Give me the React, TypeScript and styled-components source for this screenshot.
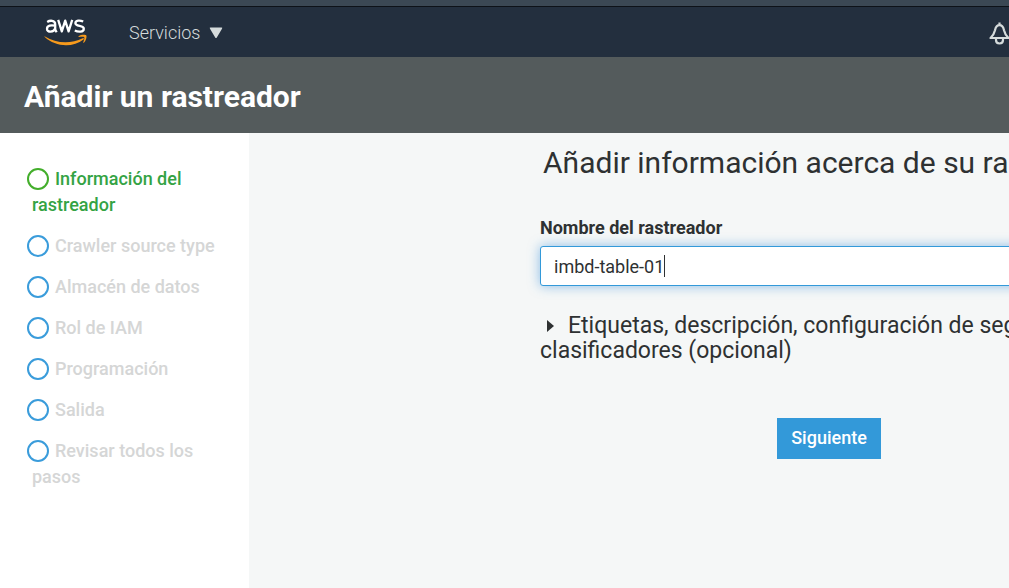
import React, { useState } from "react";
import styled, { createGlobalStyle } from "styled-components";

const GlobalStyle = createGlobalStyle`
  *, *::before, *::after { box-sizing: border-box; }
  html, body, #root { height: 100%; }
  body {
    margin: 0;
    background: #f5f7f7;
    color: #2e3132;
    font-family: Roboto, "Liberation Sans", sans-serif;
    overflow: hidden;
  }
`;

const Page = styled.div`
  display: flex;
  flex-direction: column;
  min-height: 100%;
`;

const BrowserEdge = styled.div`
  height: 7px;
  background: #3b4854;
  border-bottom: 1px solid #0d1218;
`;

const TopBar = styled.header`
  display: flex;
  align-items: center;
  height: 50px;
  padding-left: 44px;
  background: #232f3e;
`;

const LogoLink = styled.a`
  display: block;
  height: 30px;
  color: #ffffff;
`;

const ServicesButton = styled.button`
  display: flex;
  align-items: center;
  gap: 9px;
  margin-left: 41px;
  padding: 2px 0 0;
  border: 0;
  background: none;
  color: #d5dbdb;
  font: 300 18px/24px Roboto, "Liberation Sans", sans-serif;
`;

const BellButton = styled.button`
  display: block;
  height: 24px;
  margin: 4px 0 0 auto;
  padding: 0;
  border: 0;
  background: none;
  color: #d5dbdb;
`;

const TitleBar = styled.div`
  padding: 22px 24px 18px;
  background: #545b5c;
`;

const PageTitle = styled.h1`
  margin: 0;
  color: #ffffff;
  font-size: 30px;
  font-weight: 700;
  line-height: 36px;
`;

const Body = styled.div`
  display: flex;
  flex: 1;
`;

const Sidebar = styled.nav`
  flex: none;
  width: 249px;
  padding: 33px 32px;
  background: #ffffff;
`;

const Steps = styled.ol`
  display: flex;
  flex-direction: column;
  gap: 15px;
  margin: 0;
  padding: 0;
  list-style: none;
`;

const Step = styled.li<{ $active?: boolean }>`
  color: ${(p) => (p.$active ? "#34a344" : "#d5d6d6")};
  font-size: 18px;
  font-weight: 500;
  line-height: 26px;
`;

const StepMark = styled.span<{ $active?: boolean }>`
  display: inline-block;
  width: 22px;
  height: 22px;
  margin: 0 6px 0 -5px;
  border: 2px solid ${(p) => (p.$active ? "#43ae2b" : "#3a9cdb")};
  border-radius: 50%;
  vertical-align: -5px;
`;

const Main = styled.main`
  flex: 1;
  min-width: 0;
  padding: 12px 0 24px 291px;
  overflow: hidden;
`;

const Form = styled.form`
  display: flex;
  flex-direction: column;
  width: 578px;
`;

const FormTitle = styled.h2`
  margin: 0 0 0 3px;
  font-size: 30px;
  font-weight: 400;
  line-height: 36px;
  white-space: nowrap;
`;

const Label = styled.label`
  margin-top: 35px;
  font-size: 18px;
  font-weight: 700;
  line-height: 24px;
`;

const Field = styled.div`
  position: relative;
  margin-top: 6px;
`;

const TextInput = styled.input`
  display: block;
  width: 100%;
  height: 40px;
  padding: 0 13px;
  border: 1px solid #3399d9;
  border-radius: 3px;
  outline: none;
  background: #ffffff;
  box-shadow: 0 0 12px rgba(51, 140, 217, 0.55);
  color: #2e3132;
  font: 400 18px/24px Roboto, "Liberation Sans", sans-serif;
`;

/* Mirrors the typed text so the caret sits right after its last letter. */
const CaretLayer = styled.span`
  position: absolute;
  inset: 9px auto auto 14px;
  border-right: 1px solid #2e3132;
  color: transparent;
  font-size: 18px;
  line-height: 22px;
  pointer-events: none;
`;

const Disclosure = styled.button`
  margin-top: 27px;
  padding: 0;
  border: 0;
  background: none;
  color: #2e3132;
  font: 400 23px/25px Roboto, "Liberation Sans", sans-serif;
  text-align: left;
`;

const Arrow = styled.svg`
  margin: 0 14px 0 7px;
  vertical-align: 1px;
`;

const NextButton = styled.button`
  align-self: center;
  height: 41px;
  margin-top: 55px;
  padding: 0 14px 2px;
  border: 0;
  background: #3399d9;
  color: #ffffff;
  font: 500 18px/24px Roboto, "Liberation Sans", sans-serif;
`;

const AwsLogo = () => (
  <svg width="44" height="30" viewBox="0 0 44 30" fill="none" aria-hidden="true">
    <g stroke="currentColor" strokeWidth="2.3" strokeLinejoin="round">
      <path d="M3.2 4.9C5.6 3.4 11.2 2.7 11.2 7.4V12.4L12.6 15.2M11.2 8.7C7.2 7.8 3 8.3 3 11.9C3 15.7 9.8 15.7 11.2 11.4" />
      <path d="M14.2 2.9L17.8 14.4L21.2 3.6L24.6 14.4L28.2 2.9" />
      <path d="M39.2 4.5C36 3 31.4 3.1 31.4 6.2C31.4 9.9 39.8 7.9 39.8 11.7C39.8 15.5 34 15.2 30.8 13.5" />
    </g>
    <path
      d="M1 19.4C12 26.4 26.5 27.2 38.8 21.2C39.7 20.8 40.3 21.8 39.5 22.5C29 31 11 30 0.8 20.1C0.3 19.6 0.5 19.1 1 19.4Z"
      fill="#f79a1c"
    />
    <path
      d="M34.5 19.4C37 17.4 41.7 17.6 42.3 18.4C43 19.2 42.1 23.6 39.8 25.7C39.4 26 39 25.8 39.2 25.3C40 23.4 40.8 20.9 40.2 20.2C39.6 19.4 36.8 19.7 34.9 20C34.3 20.1 34.1 19.8 34.5 19.4Z"
      fill="#f79a1c"
    />
  </svg>
);

const BellIcon = () => (
  <svg width="20" height="24" viewBox="0 0 20 24" fill="none" stroke="currentColor" strokeWidth="2.2" aria-hidden="true">
    <path
      d="M10.5 0.5V3M1.5 16H19.5C16.8 13.8 15.8 11.5 15 8.2C14.3 5 12.7 3.2 10.5 3.2S6.7 5 6 8.2C5.2 11.5 4.2 13.8 1.5 16Z"
      strokeLinejoin="round"
    />
    <path d="M7 16.5V18C7 20.2 8.5 21.5 10.5 21.5S14 20.2 14 18V16.5" />
  </svg>
);

const steps = [
  "Información del rastreador",
  "Crawler source type",
  "Almacén de datos",
  "Rol de IAM",
  "Programación",
  "Salida",
  "Revisar todos los pasos",
];

export default function App() {
  const [name, setName] = useState("imbd-table-01");

  return (
    <Page>
      <GlobalStyle />
      <BrowserEdge />
      <TopBar>
        <LogoLink href="#" aria-label="aws">
          <AwsLogo />
        </LogoLink>
        <ServicesButton type="button">
          Servicios
          <svg width="14" height="12" viewBox="0 0 14 12" fill="currentColor" aria-hidden="true">
            <path d="M1.5 0.5H12.5Q13.8 0.5 13 1.8L7.8 10.5Q7 11.5 6.2 10.5L1 1.8Q0.2 0.5 1.5 0.5Z" />
          </svg>
        </ServicesButton>
        <BellButton type="button" aria-label="Notificaciones">
          <BellIcon />
        </BellButton>
      </TopBar>
      <TitleBar>
        <PageTitle>Añadir un rastreador</PageTitle>
      </TitleBar>
      <Body>
        <Sidebar>
          <Steps>
            {steps.map((step, i) => (
              <Step key={step} $active={i === 0}>
                <StepMark $active={i === 0} />
                {step}
              </Step>
            ))}
          </Steps>
        </Sidebar>
        <Main>
          <Form onSubmit={(e) => e.preventDefault()}>
            <FormTitle>Añadir información acerca de su rastreador</FormTitle>
            <Label htmlFor="crawler-name">Nombre del rastreador</Label>
            <Field>
              <TextInput
                id="crawler-name"
                value={name}
                onChange={(e) => setName(e.target.value)}
              />
              <CaretLayer aria-hidden="true">{name}</CaretLayer>
            </Field>
            <Disclosure type="button" aria-expanded="false">
              <Arrow width="7" height="12" viewBox="0 0 7 12" fill="currentColor" aria-hidden="true">
                <path d="M0 0L7 6L0 12Z" />
              </Arrow>
              Etiquetas, descripción, configuración de seguridad y clasificadores (opcional)
            </Disclosure>
            <NextButton type="submit">Siguiente</NextButton>
          </Form>
        </Main>
      </Body>
    </Page>
  );
}
